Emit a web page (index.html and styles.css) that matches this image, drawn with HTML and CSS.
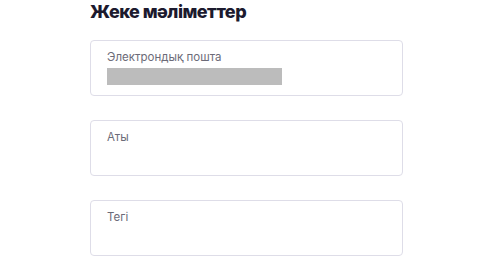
FILE: index.html
```html
<!DOCTYPE html>
<html lang="kk">
<head>
    <meta charset="UTF-8">
    <meta name="viewport" content="width=device-width, initial-scale=1.0">
    <title>Жеке мәліметтер</title>
    <link rel="stylesheet" href="styles.css">
</head>
<body>
    <div class="profile">
        <h2>Жеке мәліметтер</h2>
        <div class="field">
            <label>Электрондық пошта</label>
            <div class="masked"></div>
        </div>
        <div class="field">
            <label>Аты</label>
        </div>
        <div class="field">
            <label>Тегі</label>
        </div>
    </div>
</body>
</html>
```

FILE: styles.css
```css
html, body {
    margin: 0;
    background: #ffffff;
    font-family: Inter, "Noto Sans", sans-serif;
}
.profile {
    width: 313px;
    margin-left: 90px;
    display: flex;
    flex-direction: column;
    gap: 24px;
}
.profile h2 {
    margin: 0 0 -7px;
    padding-top: 1px;
    font-size: 18px;
    line-height: 22px;
    font-weight: 800;
    letter-spacing: -0.55px;
    color: #1c1a2e;
}
.field {
    box-sizing: border-box;
    height: 56px;
    border: 1px solid #dedde8;
    border-radius: 4px;
    padding: 8.5px 16px 0;
}
.field label {
    display: block;
    font-size: 11.5px;
    line-height: 14px;
    color: #6c6b78;
}
.masked {
    width: 175px;
    height: 17px;
    margin-top: 4px;
    background: #bcbcbc;
}
```
